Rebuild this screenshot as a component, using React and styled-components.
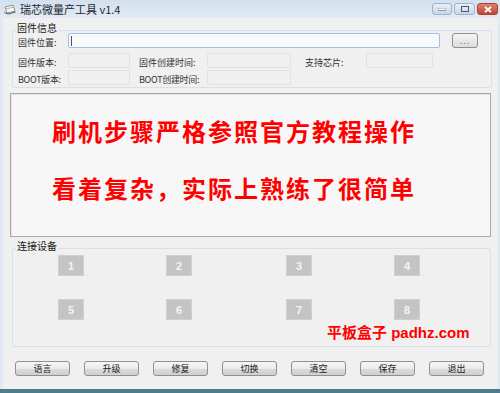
import React from "react";
import styled, { createGlobalStyle } from "styled-components";

const Global = createGlobalStyle`
  html, body { margin: 0; padding: 0; }
  body { width: 500px; height: 393px; overflow: hidden; background: #f0f0f0;
    font-family: "Noto Sans CJK SC", "Liberation Sans", sans-serif; }
`;

const Window = styled.div`
  width: 500px; height: 393px; box-sizing: border-box;
  display: flex; flex-direction: column;
  background: #dfe8f3;
  border-bottom: 4px solid #4f7d8c;
`;

const TitleBar = styled.div`
  height: 18px; flex: none; display: flex; align-items: center;
  padding: 0 2px 0 4px;
  background: linear-gradient(#d3e0ee, #e2ebf5);
`;

const TitleText = styled.span`
  margin-left: 4px; font-size: 11px; color: #1e2630; line-height: 12px;
  font-family: "Noto Sans CJK SC", "Liberation Sans", sans-serif;
`;

const Spacer = styled.div` flex: 1; `;

const WinBtn = styled.div`
  width: ${p => p.$w}px; height: 12px; box-sizing: border-box;
  margin-left: ${p => p.$ml}px; border-radius: 3px;
  display: flex; align-items: center; justify-content: center;
  border: 1px solid ${p => p.$close ? "#a44233" : "#9fb3c9"};
  background: ${p => p.$close ? "linear-gradient(#dd8372, #c24733)" : "linear-gradient(#e9f0f8, #c8d6e6)"};
`;

const Client = styled.div`
  flex: 1; display: flex; flex-direction: column;
  margin: 0 2px 0 3px; background: #f0f0f0;
  padding: 12px 6px 0 7px;
`;

const Group = styled.div`
  position: relative; border: 1px solid #d9e1e8; border-radius: 2px;
  margin-left: 2px; margin-right: ${p => p.$mr || 0}px;
  margin-top: ${p => p.$mt || 0}px;
  display: flex; flex-direction: column;
`;

const Legend = styled.span`
  position: absolute; top: -8px; left: 3px; padding: 0 1px;
  background: #f0f0f0; font-size: 10px; line-height: 10px; color: #1a1a1a;
`;

const Row = styled.div`
  display: flex; align-items: center; height: 15px;
  margin-top: ${p => p.$mt}px; margin-bottom: ${p => p.$mb || 0}px;
  padding-left: 5px;
`;

const Label = styled.span`
  width: ${p => p.$w}px; flex: none; font-size: 9px; color: #333;
  line-height: 10px; white-space: nowrap; margin-top: 4px;
  letter-spacing: ${p => p.$ls || 0}px;
`;

const Field = styled.div`
  width: ${p => p.$w}px; height: 15px; box-sizing: border-box; flex: none;
  border: 1px solid ${p => p.$active ? "#9fc3e6" : "#dde3ea"};
  border-radius: 2px;
  background: ${p => p.$active ? "#f8f9fa" : "#f0f0f0"};
  display: flex; align-items: center; padding-left: 2px;
`;

const Caret = styled.span` width: 1px; height: 10px; background: #555; `;

const Gap = styled.div` width: ${p => p.$w}px; flex: none; `;

const SmallBtn = styled.div`
  width: 26px; height: 15px; box-sizing: border-box; flex: none;
  border: 1px solid #8c8f92; border-radius: 3px;
  background: linear-gradient(#f5f5f5, #dcdcdc);
  display: flex; align-items: center; justify-content: center;
  font-size: 9px; color: #777; letter-spacing: 1px; line-height: 9px;
`;

const Board = styled.div`
  margin: 5px 1px 0 0; height: 144px; box-sizing: border-box;
  border: 1px solid #a9a9a9; background: #f7f7f7;
  padding: 22px 0 0 41px;
  box-shadow: inset 1px 1px 0 #e2e2e2;
`;

const RedLine = styled.div`
  font-family: "Noto Sans CJK SC", sans-serif; font-weight: 700;
  font-size: 24px; line-height: 30px; color: #ff0000; letter-spacing: 2px;
  white-space: nowrap; margin-top: ${p => p.$mt || 0}px;
`;

const DeviceGrid = styled.div`
  display: grid; grid-template-columns: 108px 120px 108px 26px;
  grid-template-rows: 21px 21px; row-gap: 23px;
  padding: 6px 0 26px 45px;
`;

const Device = styled.div`
  width: 26px; height: 21px; background: #c4c4c4;
  border: 1px solid #cfcfcf; box-sizing: border-box;
  display: flex; align-items: center; justify-content: center;
  color: #f4f4f4; font-weight: 700; font-size: 11px;
  font-family: "Liberation Sans", sans-serif;
`;

const Watermark = styled.div`
  position: absolute; left: 314px; top: 75px;
  color: #ff0000; font-weight: 700; font-size: 15px; line-height: 18px;
  font-family: "Liberation Sans", "Noto Sans CJK SC", sans-serif;
  white-space: nowrap;
`;

const ButtonBar = styled.div`
  display: flex; gap: 14px; margin-top: 14px; padding-left: 5px;
`;

const Btn = styled.div`
  width: 55px; height: 15px; box-sizing: border-box;
  border: 1px solid #8e9092; border-radius: 3px;
  background: linear-gradient(#f6f6f6 0%, #ebebeb 50%, #dbdbdb 51%, #d0d0d0 100%);
  display: flex; align-items: center; justify-content: center;
  font-size: 9px; color: #222; line-height: 10px;
`;

const AppIcon = () => (
  <svg width="12" height="11" viewBox="0 0 12 11">
    <path d="M1 3 L9 1 L11 7 L3 9 Z" fill="#fafafa" stroke="#7a7a7a" strokeWidth="0.8" />
    <path d="M2 5 L9 3.2" stroke="#9a9a9a" strokeWidth="0.8" />
    <path d="M0.5 8.5 L4 10 L11.5 8" stroke="#555" strokeWidth="1" fill="none" />
  </svg>
);

const devices = ["1", "2", "3", "4", "5", "6", "7", "8"];
const buttons = ["语言", "升级", "修复", "切换", "清空", "保存", "退出"];

export default function App() {
  return (
    <>
      <Global />
      <Window>
        <TitleBar>
          <AppIcon />
          <TitleText>瑞芯微量产工具 v1.4</TitleText>
          <Spacer />
          <WinBtn $w={20} $ml={0}>
            <svg width="8" height="3"><rect x="0" y="0" width="8" height="2.5" fill="#fff" stroke="#4a5a6a" strokeWidth="0.6" /></svg>
          </WinBtn>
          <WinBtn $w={21} $ml={2}>
            <svg width="8" height="6"><rect x="0.5" y="0.5" width="7" height="5" fill="none" stroke="#4a5a6a" strokeWidth="1" /></svg>
          </WinBtn>
          <WinBtn $w={21} $ml={2} $close>
            <svg width="8" height="7"><path d="M1 1 L7 6 M7 1 L1 6" stroke="#fff" strokeWidth="1.8" /></svg>
          </WinBtn>
        </TitleBar>
        <Client>
          <Group>
            <Legend>固件信息</Legend>
            <Row $mt={2}>
              <Label $w={50}>固件位置:</Label>
              <Field $w={372} $active><Caret /></Field>
              <Gap $w={12} />
              <SmallBtn>...</SmallBtn>
            </Row>
            <Row $mt={5}>
              <Label $w={50}>固件版本:</Label>
              <Field $w={62} />
              <Gap $w={9} />
              <Label $w={68}>固件创建时间:</Label>
              <Field $w={84} />
              <Gap $w={14} />
              <Label $w={61}>支持芯片:</Label>
              <Field $w={67} />
            </Row>
            <Row $mt={2} $mb={2}>
              <Label $w={50} $ls={-0.3}>BOOT版本:</Label>
              <Field $w={62} />
              <Gap $w={9} />
              <Label $w={68} $ls={-0.3}>BOOT创建时间:</Label>
              <Field $w={84} />
            </Row>
          </Group>
          <Board>
            <RedLine>刷机步骤严格参照官方教程操作</RedLine>
            <RedLine $mt={27}>看着复杂，实际上熟练了很简单</RedLine>
          </Board>
          <Group $mr={1} $mt={11}>
            <Legend>连接设备</Legend>
            <DeviceGrid>
              {devices.map(d => <Device key={d}>{d}</Device>)}
            </DeviceGrid>
            <Watermark>平板盒子 padhz.com</Watermark>
          </Group>
          <ButtonBar>
            {buttons.map(b => <Btn key={b}>{b}</Btn>)}
          </ButtonBar>
        </Client>
      </Window>
    </>
  );
}
